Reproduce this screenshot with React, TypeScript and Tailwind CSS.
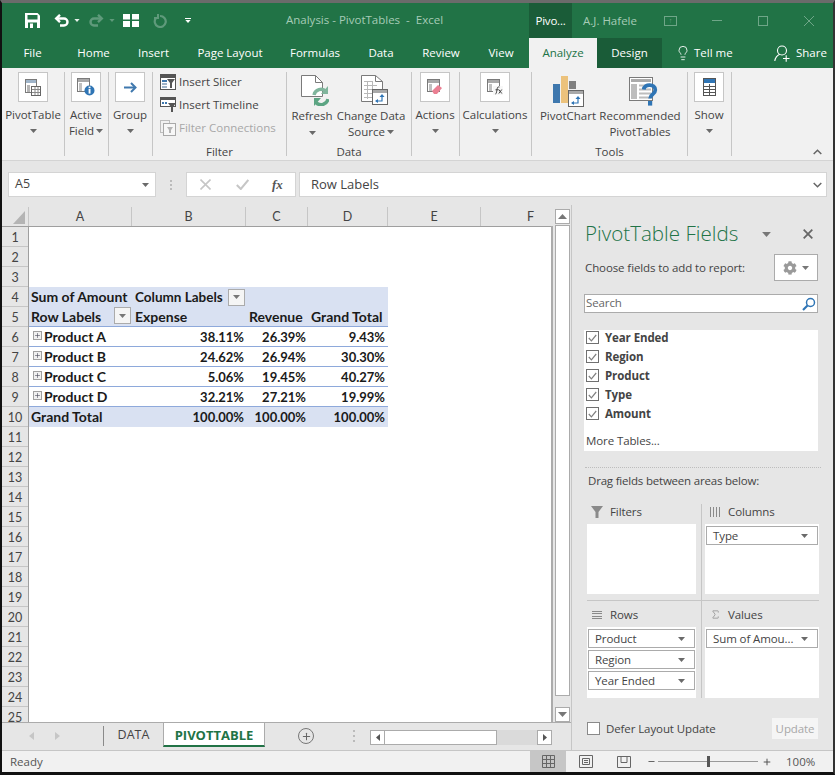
import { ReactNode } from "react"
import { Lightbulb, Sigma, Plus, Minus } from "lucide-react"
import { FaCog } from "react-icons/fa"

const ROWS = Array.from({ length: 25 }, (_, i) => i + 1)

const COLS = [
  { name: "A", w: "w-[103px]" },
  { name: "B", w: "w-[114px]" },
  { name: "C", w: "w-[62px]" },
  { name: "D", w: "w-[80px]" },
  { name: "E", w: "w-[93px]" },
  { name: "F", w: "w-[100px]" },
]

const PRODUCTS = [
  { name: "Product A", b: "38.11%", c: "26.39%", d: "9.43%" },
  { name: "Product B", b: "24.62%", c: "26.94%", d: "30.30%" },
  { name: "Product C", b: "5.06%", c: "19.45%", d: "40.27%" },
  { name: "Product D", b: "32.21%", c: "27.21%", d: "19.99%" },
]

function Caret({ color = "#6a6a6a", w = 7, h = 4 }: { color?: string; w?: number; h?: number }) {
  return (
    <svg width={w} height={h} viewBox="0 0 7 4" className="shrink-0">
      <polygon points="0,0 7,0 3.5,4" fill={color} />
    </svg>
  )
}

function Sep() {
  return <div className="w-px h-[84px] mt-[4px] bg-[#c6c6c6] shrink-0" />
}

function BoxButton({ icon, label, w }: { icon: ReactNode; label: string; w: string }) {
  return (
    <div className={`${w} shrink-0 flex flex-col items-center pt-[4px]`}>
      <div className="w-[30px] h-[30px] bg-white border border-[#c6c6c6] flex items-center justify-center">{icon}</div>
      <div className="mt-[5px] h-[16px] leading-[16px] text-[11.5px] whitespace-nowrap">{label}</div>
      <div className="mt-[6px]">
        <Caret />
      </div>
    </div>
  )
}

function PivotIcon() {
  return (
    <svg width="16" height="17" viewBox="0 0 16 17">
      <rect x="0.5" y="0.5" width="11" height="13" fill="#fff" stroke="#7a7a7a" />
      <rect x="1" y="1" width="10" height="3" fill="#9fb4c9" />
      <rect x="2" y="6" width="3" height="7" fill="#b5b5b5" />
      <rect x="6.5" y="7.5" width="9" height="9" fill="#fff" stroke="#666" />
      <path d="M7 10.5h8M7 13.5h8M10 8v8M13 8v8" stroke="#8a8a8a" strokeWidth="1" />
    </svg>
  )
}

function ActiveFieldIcon() {
  return (
    <svg width="18" height="18" viewBox="0 0 18 18">
      <rect x="0.5" y="0.5" width="12" height="13" fill="#fff" stroke="#7a7a7a" />
      <rect x="1" y="1" width="11" height="3" fill="#a9a9a9" />
      <rect x="2" y="5" width="3" height="8" fill="#c0c0c0" />
      <circle cx="12.5" cy="12.5" r="5" fill="#2f75b5" />
      <rect x="11.6" y="11" width="1.9" height="4.6" fill="#fff" />
      <rect x="11.6" y="8.6" width="1.9" height="1.6" fill="#fff" />
    </svg>
  )
}

function GroupIcon() {
  return (
    <svg width="13" height="11" viewBox="0 0 13 11">
      <path d="M0 5.5h10.5" stroke="#3f78ae" strokeWidth="2" />
      <path d="M7 1l4.5 4.5L7 10" stroke="#3f78ae" strokeWidth="2" fill="none" />
    </svg>
  )
}

function ActionsIcon() {
  return (
    <svg width="16" height="16" viewBox="0 0 16 16">
      <rect x="0.5" y="0.5" width="12" height="12" fill="#fff" stroke="#7a7a7a" />
      <rect x="1" y="1" width="11" height="3" fill="#a9a9a9" />
      <rect x="2" y="5" width="3" height="7" fill="#c0c0c0" />
      <polygon points="5,12 11,6 15,9 10,15 7,15" fill="#ea7f92" />
    </svg>
  )
}

function CalcIcon() {
  return (
    <svg width="16" height="16" viewBox="0 0 16 16">
      <rect x="0.5" y="0.5" width="12" height="12" fill="#fff" stroke="#7a7a7a" />
      <rect x="1" y="1" width="11" height="3" fill="#a9a9a9" />
      <rect x="2" y="5" width="3" height="7" fill="#c0c0c0" />
      <rect x="6" y="7" width="10" height="9" fill="#f7f7f7" />
      <path d="M8.5 15c1.5 0 1-7 2.8-7h1.2M8.5 10.8h3M11.8 10.5l3 4M14.8 10.5l-3 4" stroke="#444" strokeWidth="1" fill="none" />
    </svg>
  )
}

function ShowIcon() {
  return (
    <svg width="13" height="18" viewBox="0 0 13 18">
      <rect x="0.5" y="0.5" width="12" height="17" fill="#fff" stroke="#555" />
      <rect x="1" y="1" width="11" height="4" fill="#2f75b5" />
      <path d="M1 8.5h11M1 11.5h11M1 14.5h11M6.5 6v11" stroke="#555" strokeWidth="1" />
    </svg>
  )
}

function RefreshIcon() {
  return (
    <svg width="29" height="32" viewBox="0 0 29 32">
      <path d="M1.5 1.5h14l7 7v14h-21z" fill="#fff" stroke="#7a7a7a" />
      <path d="M15.5 1.5v7h7" fill="none" stroke="#7a7a7a" />
      <path d="M14 21a7 7 0 0 1 12-3.5" fill="none" stroke="#7fb59c" strokeWidth="3.4" />
      <path d="M28 25a7 7 0 0 1-12 3.5" fill="none" stroke="#5ca583" strokeWidth="3.4" />
      <polygon points="28,12 28,20 21,20" fill="#7fb59c" />
      <polygon points="14,32 14,24 21,24" fill="#5ca583" />
    </svg>
  )
}

function ChangeSourceIcon() {
  return (
    <svg width="28" height="31" viewBox="0 0 28 31">
      <path d="M1.5 1.5h14l7 6v20h-21z" fill="#fff" stroke="#7a7a7a" />
      <path d="M15.5 1.5v6h7" fill="none" stroke="#7a7a7a" />
      <path d="M4 7.5h9M4 11.5h13M4 15.5h13M4 19.5h13M4 23.5h13M7.5 7v18M12.5 7v18" stroke="#b8b8b8" strokeWidth="1" />
      <rect x="12.5" y="15.5" width="15" height="15" fill="#fff" stroke="#666" />
      <rect x="13" y="16" width="14" height="3" fill="#a9a9a9" />
      <path d="M16 27h6v-5" fill="none" stroke="#2f75b5" strokeWidth="1.2" />
      <polygon points="19.5,23 24.5,23 22,20" fill="#2f75b5" />
      <polygon points="18,25 18,29 15,27" fill="#2f75b5" />
    </svg>
  )
}

function PivotChartIcon() {
  return (
    <svg width="31" height="31" viewBox="0 0 31 31">
      <rect x="0" y="8" width="7" height="19" fill="#3f78ae" />
      <rect x="8" y="0" width="7" height="27" fill="#ecc27c" />
      <rect x="16" y="5" width="7" height="8" fill="#7f7f7f" />
      <rect x="15.5" y="14.5" width="15" height="16" fill="#fff" stroke="#666" />
      <rect x="16" y="15" width="14" height="3" fill="#a9a9a9" />
      <path d="M19 27h6v-5" fill="none" stroke="#2f75b5" strokeWidth="1.2" />
      <polygon points="22.5,23 27.5,23 25,20" fill="#2f75b5" />
      <polygon points="21,25 21,29 18,27" fill="#2f75b5" />
    </svg>
  )
}

function RecommendedIcon() {
  return (
    <svg width="29" height="29" viewBox="0 0 29 29">
      <rect x="0.5" y="0.5" width="23" height="23" fill="#fff" stroke="#7a7a7a" />
      <rect x="2" y="2" width="20" height="3" fill="#ababab" />
      <rect x="2" y="7" width="6" height="15" fill="#bdbdbd" />
      <path d="M10 8.5h12M10 12.5h12M10 16.5h12M10 20.5h12" stroke="#bdbdbd" strokeWidth="2" />
      <path d="M14.8 12.5c.4-6 11.5-6 11.5.5 0 4.5-5.2 4-5.2 8.5" fill="none" stroke="#2f75b5" strokeWidth="3.8" />
      <rect x="19" y="24" width="4.2" height="4.6" fill="#2f75b5" />
    </svg>
  )
}

function SlicerIcon() {
  return (
    <svg width="16" height="16" viewBox="0 0 16 16">
      <rect x="0.5" y="0.5" width="15" height="15" fill="#fff" stroke="#555" />
      <rect x="1" y="1" width="14" height="3" fill="#555" />
      <rect x="2" y="6" width="5" height="2" fill="#3f78ae" />
      <rect x="2" y="9" width="5" height="2" fill="#9fb4c9" />
      <rect x="2" y="12" width="5" height="2" fill="#9fb4c9" />
      <polygon points="7,5 15,5 12,9 12,14 10,14 10,9" fill="#555" />
    </svg>
  )
}

function TimelineIcon() {
  return (
    <svg width="16" height="15" viewBox="0 0 16 15">
      <rect x="0.5" y="0.5" width="15" height="9" fill="#fff" stroke="#555" />
      <rect x="1" y="1" width="14" height="2" fill="#555" />
      <path d="M2 6h6" stroke="#3f78ae" strokeWidth="2" strokeDasharray="2 1" />
      <polygon points="8,6 16,6 13,10 13,15 11,15 11,10" fill="#555" />
    </svg>
  )
}

function ConnectionsIcon() {
  return (
    <svg width="16" height="16" viewBox="0 0 16 16">
      <rect x="0.5" y="0.5" width="9" height="12" fill="#f1f1f1" stroke="#bdbdbd" />
      <rect x="3.5" y="3.5" width="12" height="12" fill="#f7f7f7" stroke="#a9a9a9" />
      <polygon points="7,7 13,7 11,10 11,13 9,13 9,10" fill="#b5b5b5" />
    </svg>
  )
}

function SaveIcon() {
  return (
    <svg width="15" height="15" viewBox="0 0 15 15">
      <path d="M0 0h12.5L15 2.5V15H0z" fill="#fff" />
      <rect x="2.5" y="2" width="10" height="4.5" fill="#217346" />
      <rect x="3" y="9.5" width="9" height="5.5" fill="#217346" />
      <rect x="5" y="10.5" width="3" height="4.5" fill="#fff" />
    </svg>
  )
}

function UndoIcon({ color, flip }: { color: string; flip?: boolean }) {
  return (
    <svg width="15" height="13" viewBox="0 0 15 13" className={flip ? "-scale-x-100" : ""}>
      <path d="M2 4.5h8a3.5 3.5 0 0 1 0 7H6" fill="none" stroke={color} strokeWidth="2.4" />
      <path d="M6 0.8L2.2 4.5 6 8.2" fill="none" stroke={color} strokeWidth="2.4" />
    </svg>
  )
}

function LayoutIcon() {
  return (
    <svg width="16" height="13" viewBox="0 0 16 13">
      <rect x="0" y="0" width="7" height="5.5" fill="#fff" />
      <rect x="9" y="0" width="7" height="5.5" fill="#fff" />
      <rect x="0" y="7" width="7" height="6" fill="#fff" />
      <rect x="9" y="7" width="7" height="6" fill="#fff" />
    </svg>
  )
}

function RepeatIcon() {
  return (
    <svg width="14" height="14" viewBox="0 0 14 14">
      <path d="M3 4a5.5 5.5 0 1 0 4-2" fill="none" stroke="#5f9a7b" strokeWidth="2.2" />
      <polygon points="4,0 6,0 6,5 1,5 1,3 4,3" fill="#5f9a7b" />
    </svg>
  )
}

function ShareIcon() {
  return (
    <svg width="16" height="17" viewBox="0 0 16 17">
      <circle cx="8" cy="5.5" r="4.5" fill="none" stroke="#fff" strokeWidth="1.1" />
      <path d="M0.8 16c.5-3.6 2.5-5.8 5-6.8" fill="none" stroke="#fff" strokeWidth="1.1" />
      <path d="M9 13.5h6.5M12.2 10.2v6.6" stroke="#fff" strokeWidth="1.1" />
    </svg>
  )
}

function TitleBar() {
  return (
    <div className="h-[35px] flex items-center bg-[#217346] shrink-0 text-[11.5px]">
      <div className="ml-[23px] mb-[1px]"><SaveIcon /></div>
      <div className="ml-[14px]"><UndoIcon color="#fff" /></div>
      <div className="ml-[5px]"><Caret color="#e8f1ec" w={6} h={3} /></div>
      <div className="ml-[9px]"><UndoIcon color="#5f9a7b" flip /></div>
      <div className="ml-[5px]"><Caret color="#5f9a7b" w={6} h={3} /></div>
      <div className="ml-[8px]"><LayoutIcon /></div>
      <div className="ml-[14px]"><RepeatIcon /></div>
      <div className="ml-[18px] flex flex-col items-center gap-[1px]">
        <div className="w-[6px] h-[1px] bg-white" />
        <Caret color="#fff" w={6} h={3} />
      </div>
      <div className="ml-[95px] w-[243px] text-[#a6cbb6] whitespace-pre leading-none mb-[1px]">Analysis - PivotTables  -  Excel</div>
      <div className="h-[35px] w-[43px] bg-[#1a5c38] text-white flex items-center justify-center tracking-[-0.2px]">Pivo...</div>
      <div className="ml-[11px] w-[81px] text-[#a6cbb6] whitespace-nowrap">A.J. Hafele</div>
      <div className="w-[13px] h-[10px] border border-[#6fa688] flex items-center justify-center text-[7px] text-[#6fa688] leading-none">↑</div>
      <div className="ml-[35px] w-[10px] h-px bg-[#6fa688]" />
      <div className="ml-[36px] w-[10px] h-[10px] border border-[#6fa688]" />
      <svg width="10" height="10" viewBox="0 0 10 10" className="ml-[36px]">
        <path d="M0 0l10 10M10 0L0 10" stroke="#6fa688" strokeWidth="1" />
      </svg>
    </div>
  )
}

function TabBar() {
  const tabs = [
    { t: "File", w: "w-[61px]" },
    { t: "Home", w: "w-[61px]" },
    { t: "Insert", w: "w-[59px]" },
    { t: "Page Layout", w: "w-[94px]" },
    { t: "Formulas", w: "w-[76px]" },
    { t: "Data", w: "w-[56px]" },
    { t: "Review", w: "w-[64px]" },
    { t: "View", w: "w-[56px]" },
  ]
  return (
    <div className="h-[30px] flex items-center bg-[#217346] shrink-0 text-[11.5px] text-white">
      {tabs.map((x) => (
        <div key={x.t} className={`${x.w} text-center`}>{x.t}</div>
      ))}
      <div className="w-[68px] h-[30px] bg-[#f1f1f1] text-[#217346] flex items-center justify-center">Analyze</div>
      <div className="w-[65px] h-[30px] bg-[#1a5c38] flex items-center justify-center">Design</div>
      <Lightbulb size={16} strokeWidth={1.3} className="ml-[13px] text-white" />
      <div className="ml-[3px] w-[38px] whitespace-nowrap">Tell me</div>
      <div className="ml-[42px]"><ShareIcon /></div>
      <div className="ml-[6px]">Share</div>
    </div>
  )
}

function SmallRow({ icon, label, dim }: { icon: ReactNode; label: string; dim?: boolean }) {
  return (
    <div className="h-[23px] flex items-center">
      <div className="w-[16px] flex justify-center">{icon}</div>
      <div className={`ml-[3px] text-[11.5px] whitespace-nowrap ${dim ? "text-[#a8a8a8]" : ""}`}>{label}</div>
    </div>
  )
}

function Ribbon() {
  return (
    <div className="h-[92px] flex bg-[#f1f1f1] shrink-0 text-[#444]">
      <BoxButton w="w-[62px]" icon={<PivotIcon />} label="PivotTable" />
      <Sep />
      <div className="w-[43px] shrink-0 flex flex-col items-center pt-[4px] pr-px">
        <div className="w-[30px] h-[30px] bg-white border border-[#c6c6c6] flex items-center justify-center"><ActiveFieldIcon /></div>
        <div className="mt-[5px] h-[16px] leading-[16px] text-[11.5px]">Active</div>
        <div className="h-[16px] flex items-center gap-[2px] text-[11.5px]">Field <Caret /></div>
      </div>
      <Sep />
      <BoxButton w="w-[43px] pr-px" icon={<GroupIcon />} label="Group" />
      <Sep />
      <div className="w-[133px] shrink-0 flex flex-col pl-[7px] pt-[2px]">
        <SmallRow icon={<SlicerIcon />} label="Insert Slicer" />
        <SmallRow icon={<TimelineIcon />} label="Insert Timeline" />
        <SmallRow icon={<ConnectionsIcon />} label="Filter Connections" dim />
        <div className="mt-[5px] -ml-[7px] text-center text-[11.5px] leading-[16px]">Filter</div>
      </div>
      <Sep />
      <div className="w-[124px] shrink-0 flex flex-col">
        <div className="flex h-[76px]">
          <div className="w-[50px] flex flex-col items-center pt-[6px]">
            <div className="ml-[5px]"><RefreshIcon /></div>
            <div className="mt-[2px] text-[11.5px] leading-[16px]">Refresh</div>
            <div className="mt-[7px]"><Caret /></div>
          </div>
          <div className="w-[74px] flex flex-col items-center pt-[6px]">
            <ChangeSourceIcon />
            <div className="mt-[3px] mr-[6px] text-[11.5px] leading-[16px] whitespace-nowrap">Change Data</div>
            <div className="mr-[6px] flex items-center gap-[2px] text-[11.5px] leading-[16px]">Source <Caret /></div>
          </div>
        </div>
        <div className="text-center text-[11.5px] leading-[16px]">Data</div>
      </div>
      <Sep />
      <BoxButton w="w-[47px] pr-px" icon={<ActionsIcon />} label="Actions" />
      <Sep />
      <BoxButton w="w-[71px] pr-px" icon={<CalcIcon />} label="Calculations" />
      <Sep />
      <div className="w-[155px] shrink-0 flex flex-col">
        <div className="flex h-[76px]">
          <div className="w-[68px] flex flex-col items-center pt-[8px] pl-[4px]">
            <PivotChartIcon />
            <div className="mt-[1px] text-[11.5px] leading-[16px] whitespace-nowrap">PivotChart</div>
          </div>
          <div className="w-[87px] flex flex-col items-center pt-[9px]">
            <RecommendedIcon />
            <div className="mt-[2px] mr-[7px] text-[11.5px] leading-[16px] whitespace-nowrap">Recommended</div>
            <div className="mr-[7px] text-[11.5px] leading-[16px]">PivotTables</div>
          </div>
        </div>
        <div className="text-center text-[11.5px] leading-[16px]">Tools</div>
      </div>
      <Sep />
      <BoxButton w="w-[43px] pr-px" icon={<ShowIcon />} label="Show" />
      <Sep />
      <div className="flex-1 flex justify-end items-end pb-[5px] pr-[11px]">
        <svg width="9" height="6" viewBox="0 0 9 6">
          <path d="M0.7 5L4.5 1.2 8.3 5" fill="none" stroke="#666" strokeWidth="1.5" />
        </svg>
      </div>
    </div>
  )
}

function FormulaBar() {
  return (
    <div className="h-[40px] flex bg-[#e6e6e6] border-t border-[#d4d4d4] pt-[11px] pl-[6px] shrink-0 text-[12.5px] text-[#444]">
      <div className="w-[148px] h-[25px] bg-white border border-[#d4d4d4] flex items-center justify-between pl-[6px] pr-[6px]">
        <span>A5</span>
        <Caret />
      </div>
      <div className="w-[30px] h-[25px] flex items-center justify-center">
        <div className="w-[2px] h-[10px] border-y-[2px] border-[#bbb] flex items-center"><div className="w-[2px] h-[2px] bg-[#bbb]" /></div>
      </div>
      <div className="w-[110px] h-[25px] bg-white border border-[#d4d4d4] flex items-center">
        <svg width="11" height="11" viewBox="0 0 11 11" className="ml-[13px]">
          <path d="M0.5 0.5l10 10M10.5 0.5l-10 10" stroke="#c6c6c6" strokeWidth="1.6" />
        </svg>
        <svg width="13" height="11" viewBox="0 0 13 11" className="ml-[25px]">
          <path d="M0.8 6l4 4 7.5-9" fill="none" stroke="#c6c6c6" strokeWidth="2" />
        </svg>
        <span className="ml-[23px] font-['Liberation_Serif',serif] italic font-bold text-[13px] text-[#555]">fx</span>
      </div>
      <div className="ml-[3px] w-[528px] h-[25px] bg-white border border-[#d4d4d4] flex items-center justify-between pl-[11px] pr-[4px]">
        <span className="text-[13px] pt-px">Row Labels</span>
        <svg width="9" height="6" viewBox="0 0 9 6">
          <path d="M0.7 1L4.5 4.8 8.3 1" fill="none" stroke="#666" strokeWidth="1.5" />
        </svg>
      </div>
    </div>
  )
}

function FilterBtn() {
  return (
    <div className="w-[17px] h-[17px] bg-[#f5f5f5] border border-[#ababab] flex items-center justify-center shrink-0">
      <Caret color="#777" w={7} h={4} />
    </div>
  )
}

function PivotTable() {
  return (
    <div className="w-[359px] font-['Lato',sans-serif] font-bold text-[14px] leading-[20px] text-[#1a1a1a]">
      <div className="flex h-[20px] bg-[#d9e1f2]">
        <div className="w-[103px] pl-[2px] whitespace-nowrap">Sum of Amount</div>
        <div className="w-[114px] pl-[3px] flex items-center justify-between pr-[1px] text-[13.5px]">
          <span>Column Labels</span>
          <FilterBtn />
        </div>
      </div>
      <div className="flex h-[20px] bg-[#d9e1f2] border-b border-[#8ea9db]">
        <div className="w-[103px] pl-[2px] flex items-start justify-between pr-[1px]">
          <span>Row Labels</span>
          <FilterBtn />
        </div>
        <div className="w-[114px] pl-[3px]">Expense</div>
        <div className="w-[62px] pl-[3px]">Revenue</div>
        <div className="w-[80px] pl-[3px]">Grand Total</div>
      </div>
      {PRODUCTS.map((p) => (
        <div key={p.name} className="flex h-[20px] border-b border-[#8ea9db]">
          <div className="w-[103px] pl-[4px] flex items-center">
            <div className="w-[9px] h-[9px] border border-[#a0a0a0] bg-[#f0f0f0] flex items-center justify-center shrink-0 mb-[2px]">
              <Plus size={7} strokeWidth={2} className="text-[#445]" />
            </div>
            <span className="ml-[2px] leading-[21px]">{p.name}</span>
          </div>
          <div className="w-[114px] pr-[2px] text-right text-[13px] leading-[21px]">{p.b}</div>
          <div className="w-[62px] pr-[2px] text-right text-[13px] leading-[21px]">{p.c}</div>
          <div className="w-[80px] pr-[3px] text-right text-[13px] leading-[21px]">{p.d}</div>
        </div>
      ))}
      <div className="flex h-[20px] bg-[#d9e1f2]">
        <div className="w-[103px] pl-[2px]">Grand Total</div>
        <div className="w-[114px] pr-[2px] text-right text-[13px] leading-[21px]">100.00%</div>
        <div className="w-[62px] pr-[2px] text-right text-[13px] leading-[21px]">100.00%</div>
        <div className="w-[80px] pr-[3px] text-right text-[13px] leading-[21px]">100.00%</div>
      </div>
    </div>
  )
}

function Sheet() {
  return (
    <div className="h-[522px] flex shrink-0">
      <div className="w-[549px] flex flex-col overflow-hidden">
        <div className="h-[7px] shrink-0" />
        <div className="h-[19px] flex shrink-0 overflow-hidden font-['Lato',sans-serif] text-[12.5px] text-[#444]">
          <div className="w-[27px] shrink-0 border-r border-[#c6c6c6] flex items-end justify-end pb-[2px] pr-[3px]">
            <svg width="12" height="13" viewBox="0 0 12 13">
              <polygon points="12,0 12,13 0,13" fill="#b4b4b4" />
            </svg>
          </div>
          {COLS.map((c) => (
            <div key={c.name} className={`${c.w} shrink-0 text-center leading-[20px] border-r border-[#c6c6c6]`}>{c.name}</div>
          ))}
        </div>
        <div className="flex flex-1 min-h-0 border-t border-[#9f9f9f]">
          <div className="w-[27px] shrink-0 overflow-hidden border-r border-[#9f9f9f] font-['Lato',sans-serif] text-[12.5px] text-[#444]">
            {ROWS.map((r) => (
              <div key={r} className="h-[20px] border-b border-[#c6c6c6] text-center leading-[21px]">{r}</div>
            ))}
          </div>
          <div className="flex-1 bg-white pt-[60px] overflow-hidden">
            <PivotTable />
          </div>
        </div>
      </div>
      <div className="w-[20px] flex shrink-0">
        <div className="w-[2px] mt-[26px] bg-[#ababab]" />
        <div className="ml-[2px] w-[15px] pt-[9px] flex flex-col h-full">
          <div className="h-[15px] bg-white border border-[#ababab] flex items-center justify-center shrink-0">
            <svg width="9" height="5" viewBox="0 0 9 5"><polygon points="0,5 9,5 4.5,0" fill="#777" /></svg>
          </div>
          <div className="mt-px h-[471px] bg-white border border-[#ababab] shrink-0" />
          <div className="h-[11px] shrink-0" />
          <div className="h-[15px] bg-white border border-[#ababab] flex items-center justify-center shrink-0">
            <svg width="9" height="5" viewBox="0 0 9 5"><polygon points="0,0 9,0 4.5,5" fill="#777" /></svg>
          </div>
        </div>
      </div>
    </div>
  )
}

function SheetTabs() {
  return (
    <div className="h-[28px] flex items-start border-t border-[#ababab] text-[12.5px] text-[#444]">
      <svg width="5" height="8" viewBox="0 0 5 8" className="ml-[27px] mt-[9px]"><polygon points="5,0 5,8 0,4" fill="#c6c6c6" /></svg>
      <svg width="5" height="8" viewBox="0 0 5 8" className="ml-[21px] mt-[9px]"><polygon points="0,0 0,8 5,4" fill="#c6c6c6" /></svg>
      <div className="ml-[43px] mt-[3px] w-px h-[20px] bg-[#8a8a8a]" />
      <div className="w-[59px] text-center leading-[24px]">DATA</div>
      <div className="-mt-px w-[102px] h-[25px] bg-white border-x border-t border-[#ababab] border-b-2 border-b-[#217346] font-bold text-[13px] text-[#217346] text-center leading-[24px]">PIVOTTABLE</div>
      <div className="ml-[33px] mt-[5px] w-[16px] h-[16px] rounded-full border border-[#777] flex items-center justify-center">
        <Plus size={11} strokeWidth={2.2} className="text-[#666]" />
      </div>
      <div className="ml-[39px] mt-[7px] flex flex-col gap-[3px]">
        <div className="w-[2px] h-[2px] bg-[#bbb]" />
        <div className="w-[2px] h-[2px] bg-[#bbb]" />
        <div className="w-[2px] h-[2px] bg-[#bbb]" />
      </div>
      <div className="ml-[15px] mt-[7px] flex h-[15px]">
        <div className="w-[15px] bg-white border border-[#ababab] flex items-center justify-center">
          <svg width="4" height="7" viewBox="0 0 4 7"><polygon points="4,0 4,7 0,3.5" fill="#555" /></svg>
        </div>
        <div className="w-[112px] bg-white border-y border-r border-[#ababab]" />
        <div className="w-[40px] bg-[#dadada]" />
        <div className="w-[15px] bg-white border border-[#ababab] flex items-center justify-center">
          <svg width="4" height="7" viewBox="0 0 4 7"><polygon points="0,0 0,7 4,3.5" fill="#555" /></svg>
        </div>
      </div>
    </div>
  )
}

function FieldCheck({ label }: { label: string }) {
  return (
    <div className="h-[19px] flex items-center">
      <div className="ml-[2px] w-[13px] h-[13px] bg-white border border-[#707070] flex items-center justify-center shrink-0">
        <svg width="9" height="8" viewBox="0 0 9 8"><path d="M0.8 4l2.6 2.8L8.2 1" fill="none" stroke="#808080" strokeWidth="1.2" /></svg>
      </div>
      <span className="ml-[6px] font-bold text-[11.5px] text-[#444]">{label}</span>
    </div>
  )
}

function Pill({ label }: { label: string }) {
  return (
    <div className="h-[19px] mx-px bg-white border border-[#ababab] flex items-center justify-between pl-[6px] pr-[9px] text-[11.5px] text-[#444] whitespace-nowrap">
      <span>{label}</span>
      <Caret w={7} h={4} />
    </div>
  )
}

function AreaLabel({ icon, label, h }: { icon: ReactNode; label: string; h: string }) {
  return (
    <div className={`${h} pl-[4px] pb-[4px] flex items-center text-[11.5px] text-[#444]`}>
      <div className="w-[12px] flex justify-center">{icon}</div>
      <span className="ml-[7px]">{label}</span>
    </div>
  )
}

function FieldPane() {
  return (
    <div className="flex-1 pt-[5px] min-w-0">
      <div className="h-full w-full border-l border-[#c6c6c6] pl-[12px] pr-[15px] pt-[15px] text-[#444] text-[11.5px] tracking-[-0.1px]">
        <div className="h-[28px] flex items-center justify-between">
          <span className="ml-px mb-[2px] text-[20.6px] font-light text-[#217346] whitespace-nowrap tracking-normal">PivotTable Fields</span>
          <div className="flex items-center">
            <Caret color="#777" w={9} h={5} />
            <svg width="10" height="10" viewBox="0 0 10 10" className="ml-[32px] mr-[5px]">
              <path d="M0.7 0.7l8.6 8.6M9.3 0.7L0.7 9.3" stroke="#666" strokeWidth="1.8" />
            </svg>
          </div>
        </div>
        <div className="mt-[6px] h-[27px] flex items-center justify-between">
          <span className="ml-px">Choose fields to add to report:</span>
          <div className="w-[44px] h-[27px] bg-white border border-[#ababab] flex items-center justify-center gap-[5px]">
            <FaCog size={14} className="text-[#9a9a9a]" />
            <Caret color="#777" />
          </div>
        </div>
        <div className="mt-[13px] h-[19px] bg-white border border-[#ababab] flex items-center justify-between pl-[1px] pr-[1px] text-[#666]">
          <span className="mb-px">Search</span>
          <svg width="14" height="14" viewBox="0 0 14 14">
            <circle cx="8.5" cy="5.5" r="4" fill="none" stroke="#2f75b5" strokeWidth="1.5" />
            <path d="M5.5 8.5L1 13" stroke="#2f75b5" strokeWidth="2.2" />
          </svg>
        </div>
        <div className="mt-[17px] h-[121px] bg-white flex flex-col">
          <div className="-mt-[2px] flex flex-col">
            <FieldCheck label="Year Ended" />
            <FieldCheck label="Region" />
            <FieldCheck label="Product" />
            <FieldCheck label="Type" />
            <FieldCheck label="Amount" />
          </div>
          <div className="mt-[10px] ml-[2px] leading-[16px]">More Tables...</div>
        </div>
        <div className="mt-[16px] ml-px mr-[-3px] border-t border-dotted border-[#bdbdbd]" />
        <div className="mt-[5px] ml-[4px] leading-[16px] tracking-[-0.2px]">Drag fields between areas below:</div>
        <div className="mt-[15px] ml-[3px] w-[232px] grid grid-cols-[109px_9px_114px] grid-rows-[90px_12px_92px]">
          <div className="col-start-1 row-start-1 flex flex-col">
            <AreaLabel h="h-[20px]" label="Filters" icon={
              <svg width="12" height="12" viewBox="0 0 12 12"><polygon points="0,0 12,0 7.5,6 7.5,12 4.5,12 4.5,6" fill="#8a8a8a" /></svg>
            } />
            <div className="h-[70px] bg-white" />
          </div>
          <div className="col-start-3 row-start-1 flex flex-col">
            <AreaLabel h="h-[20px]" label="Columns" icon={
              <svg width="10" height="10" viewBox="0 0 10 10"><path d="M0.5 0v10M3.5 0v10M6.5 0v10M9.5 0v10" stroke="#8a8a8a" strokeWidth="1" /></svg>
            } />
            <div className="h-[70px] bg-white pt-[2px]"><Pill label="Type" /></div>
          </div>
          <div className="col-start-1 col-span-3 row-start-2 self-center h-px bg-[#c6c6c6]" />
          <div className="col-start-2 row-start-1 row-span-3 pl-[5px]">
            <div className="w-px h-full bg-[#c6c6c6]" />
          </div>
          <div className="col-start-1 row-start-3 flex flex-col">
            <AreaLabel h="h-[21px]" label="Rows" icon={
              <svg width="10" height="8" viewBox="0 0 10 8"><path d="M0 0.5h10M0 2.5h10M0 5.5h10M0 7.5h10" stroke="#8a8a8a" strokeWidth="1" /></svg>
            } />
            <div className="h-[71px] bg-white pt-[2px] flex flex-col gap-[2px]">
              <Pill label="Product" />
              <Pill label="Region" />
              <Pill label="Year Ended" />
            </div>
          </div>
          <div className="col-start-3 row-start-3 flex flex-col">
            <AreaLabel h="h-[21px]" label="Values" icon={<Sigma size={11} strokeWidth={1.6} className="text-[#8a8a8a]" />} />
            <div className="h-[71px] bg-white pt-[2px]"><Pill label="Sum of Amou..." /></div>
          </div>
        </div>
        <div className="mt-[20px] ml-[3px] h-[21px] flex items-center justify-between">
          <div className="flex items-center">
            <div className="w-[13px] h-[13px] bg-white border border-[#8a8a8a]" />
            <span className="ml-[6px]">Defer Layout Update</span>
          </div>
          <div className="w-[46px] h-[21px] bg-[#f5f5f5] flex items-center justify-center text-[#a8a8a8]">Update</div>
        </div>
      </div>
    </div>
  )
}

function StatusBar() {
  return (
    <div className="h-[22px] flex items-center bg-[#f1f1f1] border-t border-[#c6c6c6] text-[11.5px] text-[#555] shrink-0">
      <span className="ml-[8px] w-[520px]">Ready</span>
      <div className="w-[36px] h-[21px] bg-[#c6c6c6] flex items-center justify-center">
        <svg width="13" height="13" viewBox="0 0 13 13"><path d="M0.5 0.5h12v12h-12zM0.5 4.5h12M0.5 8.5h12M4.5 0.5v12M8.5 0.5v12" fill="none" stroke="#666" /></svg>
      </div>
      <svg width="14" height="13" viewBox="0 0 14 13" className="ml-[13px]">
        <path d="M0.5 0.5h13v12h-13zM3.5 3.5h7v6h-7zM5 5.5h4M5 7.5h4" fill="none" stroke="#666" />
      </svg>
      <svg width="14" height="12" viewBox="0 0 14 12" className="ml-[24px]">
        <path d="M0.5 11.5v-11h13v11zM4 0.5v6h6v-6" fill="none" stroke="#666" />
      </svg>
      <Minus size={9} strokeWidth={2.4} className="ml-[16px] text-[#555]" />
      <div className="ml-[2px] w-[100px] h-[9px] relative flex items-center">
        <div className="w-full h-px bg-[#999]" />
        <div className="absolute left-[49px] top-[-1px] w-[3px] h-[11px] bg-[#555]" />
      </div>
      <Plus size={10} strokeWidth={2.4} className="ml-[4px] text-[#555]" />
      <span className="ml-[14px]">100%</span>
    </div>
  )
}

export default function App() {
  return (
    <div className="w-[835px] h-[775px] flex flex-col overflow-hidden bg-[#e6e6e6] border-l-2 border-r-2 border-l-[#111] border-r-[#333] border-t-[3px] border-t-[#6b6b6b] border-b-[3px] border-b-[#111] font-['Open_Sans',sans-serif]">
      <TitleBar />
      <TabBar />
      <Ribbon />
      <FormulaBar />
      <div className="h-[550px] flex shrink-0">
        <div className="w-[569px] shrink-0 flex flex-col">
          <Sheet />
          <SheetTabs />
        </div>
        <FieldPane />
      </div>
      <StatusBar />
    </div>
  )
}
